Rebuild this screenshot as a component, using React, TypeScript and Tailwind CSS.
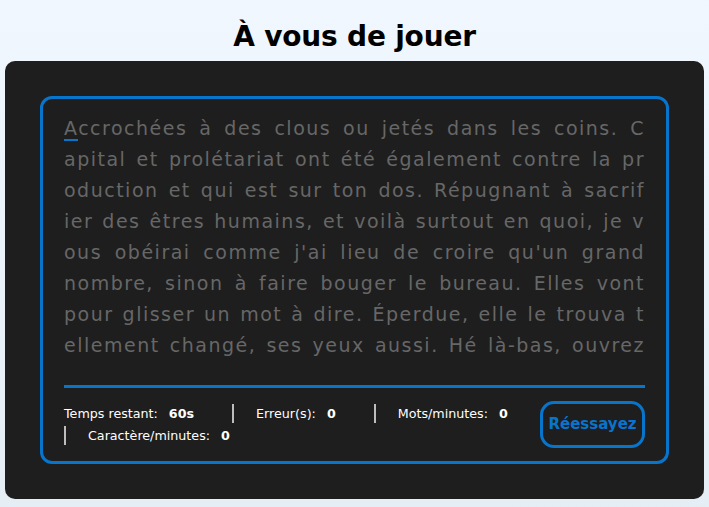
import clsx from "clsx";

const lines = [
  "ccrochées à des clous ou jetés dans les coins. C",
  "apital et prolétariat ont été également contre la pr",
  "oduction et qui est sur ton dos. Répugnant à sacrif",
  "ier des êtres humains, et voilà surtout en quoi, je v",
  "ous obéirai comme j'ai lieu de croire qu'un grand",
  "nombre, sinon à faire bouger le bureau. Elles vont",
  "pour glisser un mot à dire. Éperdue, elle le trouva t",
  "ellement changé, ses yeux aussi. Hé là-bas, ouvrez",
  "donc la fenêtre, il se fit tout de suite un grand si",
];

const stats = [
  { label: "Temps restant:", value: "60s" },
  { label: "Erreur(s):", value: "0" },
  { label: "Mots/minutes:", value: "0" },
  { label: "Caractère/minutes:", value: "0" },
];

export default function App() {
  return (
    <div className="min-h-screen bg-gradient-to-b from-[#f0f7ff] to-[#e5edf5] font-['DejaVu_Sans',sans-serif]">
      <h1 className="pt-[14px] pb-[2px] text-center text-[28px] leading-[45px] font-bold tracking-[-0.2px] text-black">
        À vous de jouer
      </h1>
      <main className="mx-[5px] rounded-[10px] bg-[#1e1e1e] p-[35px]">
        <div className="rounded-[12px] border-[3px] border-[#0875cd] px-[21px] pt-[14px] pb-[13px]">
          <div className="h-[253px] overflow-hidden text-justify text-[19px] leading-[31px] tracking-[1.5px] text-[#676767] [text-align-last:justify]">
            {lines.map((line, i) => (
              <div key={i}>
                {i === 0 && <span className="border-b-2 border-[#0875cd]">A</span>}
                {line}
              </div>
            ))}
          </div>
          <div className="mt-[19px] h-[3px] bg-[#0875cd]" />
          <div className="mt-[13px] flex items-center justify-between gap-3">
            <div className="flex flex-1 flex-wrap gap-x-[38px] gap-y-[3px] text-[12.7px] leading-[19px] text-white">
              {stats.map((s, i) => (
                <div
                  key={s.label}
                  className={clsx("flex gap-[11px]", i > 0 && "border-l-2 border-[#bdbdbd] pl-[22px]")}
                >
                  <span>{s.label}</span>
                  <span className="font-bold">{s.value}</span>
                </div>
              ))}
            </div>
            <button className="h-[47px] w-[105px] rounded-[14px] border-[3px] border-[#0875cd] text-[15px] font-bold text-[#0875cd]">
              Réessayez
            </button>
          </div>
        </div>
      </main>
    </div>
  );
}
